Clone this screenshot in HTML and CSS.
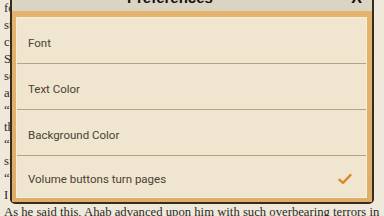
FILE: index.html
```html
<!DOCTYPE html>
<html>
<head>
<meta charset="utf-8">
<link rel="stylesheet" href="styles.css">
</head>
<body>
<div class="book">
  <div class="line">for the owners, and as the owners were his conscience he would not care</div>
  <div class="line">stood there, and I say to thee, Starbuck, mind thy conscience thou art'</div>
  <div class="line">conscience, aye, in this ship's keel.—On deck, I say, or thou shalt V</div>
  <div class="line">Starbuck, moving further into the cabin, with a daring so strangely T</div>
  <div class="line">so respectful and cautious that it almost seemed not only every way</div>
  <div class="line">avoid the slightest outward manifestation of itself, but within also f</div>
  <div class="line">“A better man than I might well pass over in thee what he would soon r</div>
  <div class="line">thee enough resent in a younger man; aye, and in a happier, Captain</div>
  <div class="line">“Devils! Dost thou then so much as dare to critically think of me? r</div>
  <div class="line">sir, not yet; I do entreat. And I do dare, sir, to be forbearing! Shall</div>
  <div class="line">“Not understand each other better than hitherto, Captain Ahab?” r</div>
  <div class="line">I say there is one God that is Lord over the earth, and one Captain</div>
  <div class="line">As he said this, Ahab advanced upon him with such overbearing terrors in</div>
</div>

<div class="dialog">
  <div class="titlebar">
    <span class="title">Preferences</span>
    <span class="close">X</span>
  </div>
  <div class="frame">
    <div class="panel">
      <div class="row">Font</div>
      <div class="row">Text Color</div>
      <div class="row">Background Color</div>
      <div class="row last">
        <span>Volume buttons turn pages</span>
        <svg class="check" width="14" height="12" viewBox="0 0 14 12">
          <path d="M1.5 6.8 L5 9.8 L12.5 2" fill="none" stroke="#d4892a" stroke-width="2.4" stroke-linecap="round" stroke-linejoin="round"/>
        </svg>
      </div>
    </div>
  </div>
</div>
</body>
</html>
```

FILE: styles.css
```css
html, body {
  margin: 0;
  padding: 0;
}
body {
  width: 384px;
  height: 216px;
  overflow: hidden;
  background: #efe9db;
  position: relative;
}
.book {
  padding: 0 0 0 4px;
  font-family: "Liberation Serif", serif;
  font-size: 12.7px;
  line-height: 17px;
  color: #2e2a25;
}
.line {
  white-space: nowrap;
  overflow: hidden;
}
.dialog {
  position: absolute;
  left: 10px;
  top: -17px;
  width: 360px;
  border: 2px solid #3a2a1b;
  border-radius: 0 0 5px 5px;
  background: #dfb16c;
  display: flex;
  flex-direction: column;
}
.titlebar {
  height: 21px;
  padding: 0 10px 5px 115px;
  background: #dbd4c2;
  display: flex;
  align-items: flex-end;
  justify-content: space-between;
  font-family: "Liberation Sans", sans-serif;
  font-weight: bold;
  color: #111;
  line-height: 17px;
}
.title {
  font-size: 15px;
}
.close {
  font-size: 16px;
}
.frame {
  padding: 6px 5px 4px 4px;
  background: linear-gradient(#e4b46e, #dcae6a);
}
.panel {
  background: #f0e5ce;
  border: 1px solid #f6eedd;
  display: flex;
  flex-direction: column;
}
.row {
  height: 41px;
  padding: 4px 10px 0 11px;
  border-bottom: 1px solid #b3a283;
  display: flex;
  align-items: center;
  justify-content: space-between;
  font-family: Roboto, sans-serif;
  font-size: 11.5px;
  color: #4a4234;
}
.row.last {
  border-bottom: none;
  height: 37px;
}
.check {
  margin-right: 4px;
}
```
